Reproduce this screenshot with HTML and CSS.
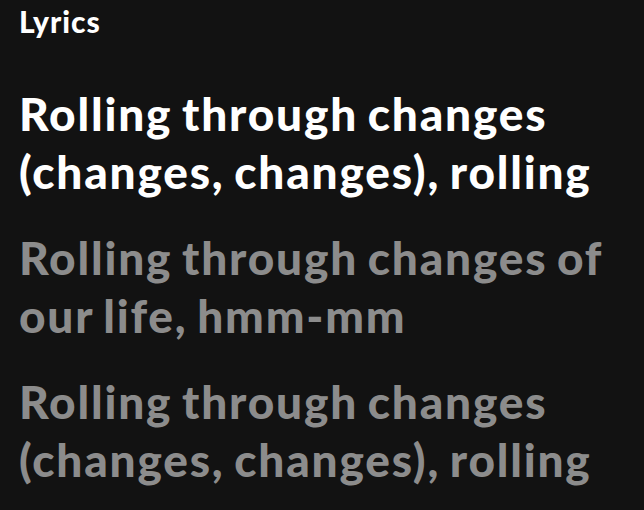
FILE: index.html
```html
<!DOCTYPE html>
<html lang="en">
<head>
    <meta charset="UTF-8">
    <meta name="viewport" content="width=device-width, initial-scale=1.0">
    <title>Lyrics</title>
    <link rel="stylesheet" href="styles.css">
</head>
<body>
    <div class="lyrics-page">
        <div class="lyrics-title">Lyrics</div>
        <div class="lyrics-lines">
            <div class="lyric-line active">Rolling through changes (changes, changes), rolling</div>
            <div class="lyric-line">Rolling through changes of our life, hmm-mm</div>
            <div class="lyric-line">Rolling through changes (changes, changes), rolling</div>
        </div>
    </div>
</body>
</html>
```

FILE: styles.css
```css
body {
    margin: 0;
    background-color: #121212;
    color: #ffffff;
    font-family: "Lato", "Liberation Sans", sans-serif;
    overflow: hidden;
}
.lyrics-page {
    padding: 3px 19px 0 19px;
}
.lyrics-title {
    font-size: 30px;
    font-weight: 900;
    line-height: 1.2;
    letter-spacing: 1px;
    margin-bottom: 46px;
}
.lyrics-lines {
    display: flex;
    flex-direction: column;
    gap: 29px;
}
.lyric-line {
    font-size: 46px;
    font-weight: 900;
    line-height: 1.25;
    letter-spacing: 1.8px;
    word-spacing: -3px;
    color: #8c8c8c;
}
.lyric-line.active {
    color: #ffffff;
}
```
